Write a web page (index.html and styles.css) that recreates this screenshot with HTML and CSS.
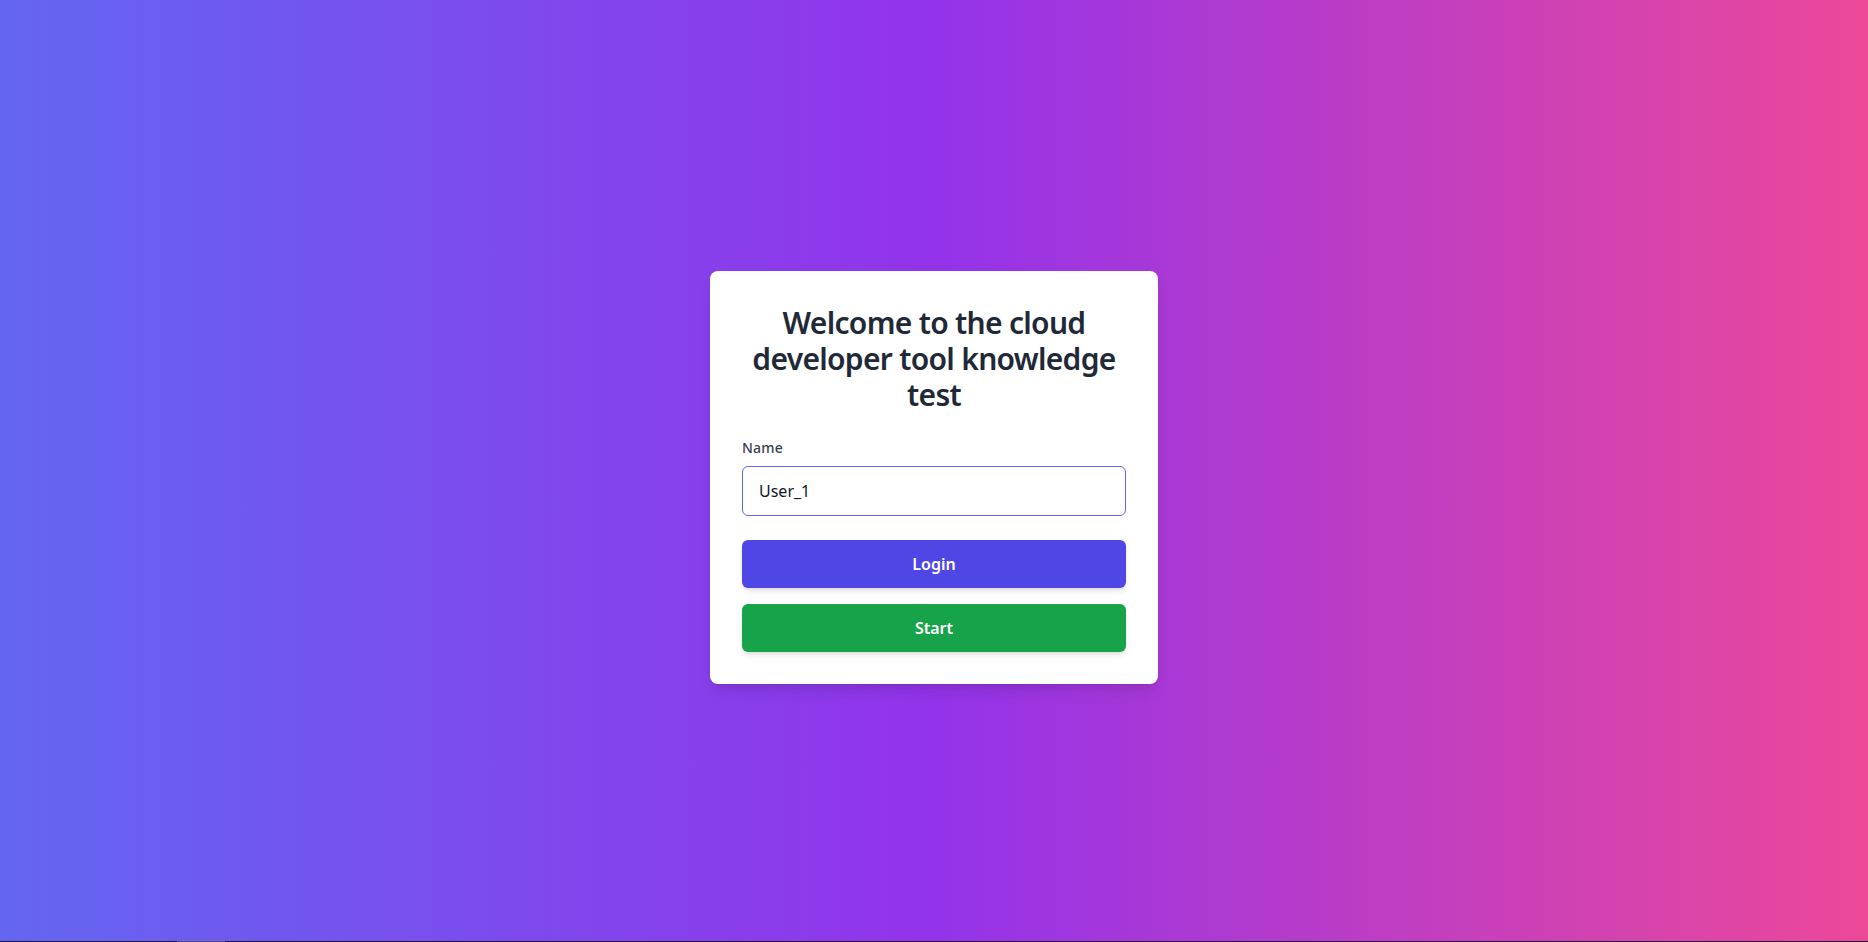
FILE: index.html
```html
<!DOCTYPE html>
<html lang="en">
<head>
<meta charset="utf-8">
<title>Cloud developer tool knowledge test</title>
<link rel="stylesheet" href="styles.css">
</head>
<body>
<main class="page">
  <section class="card">
    <h1 class="title">Welcome to the cloud developer tool knowledge test</h1>
    <form class="form">
      <label class="label" for="name">Name</label>
      <input class="input" id="name" type="text" value="User_1">
      <button type="button" class="btn btn-login">Login</button>
      <button type="button" class="btn btn-start">Start</button>
    </form>
  </section>
</main>
<div class="bottom-line"><span class="bottom-thumb"></span></div>
</body>
</html>
```
FILE: styles.css
```css
* { box-sizing: border-box; }
html, body { margin: 0; padding: 0; height: 100%; }
body {
  font-family: "Noto Sans", "Open Sans", "Liberation Sans", sans-serif;
  background: linear-gradient(to right, #6366f1, #9333ea, #ec4899);
  overflow: hidden;
}
.page {
  min-height: 100vh;
  display: flex;
  align-items: center;
  justify-content: center;
  padding-top: 13px;
}
.card {
  width: 448px;
  background: #fff;
  border-radius: 8px;
  padding: 32px;
  box-shadow: 0 10px 15px -3px rgba(0,0,0,0.1), 0 4px 6px -4px rgba(0,0,0,0.1);
}
.title {
  margin: 0 0 25px;
  padding-top: 2px;
  font-size: 30px;
  line-height: 36px;
  font-weight: 600;
  color: #1f2937;
  text-align: center;
  letter-spacing: -0.7px;
}
.form { display: flex; flex-direction: column; }
.label {
  font-size: 14px;
  line-height: 20px;
  font-weight: 500;
  color: #374151;
  margin-bottom: 8px;
  letter-spacing: 0.2px;
}
.input {
  height: 50px;
  border: 1px solid #6366f1;
  border-radius: 6px;
  padding: 0 16px;
  font-family: inherit;
  font-size: 16px;
  color: #111827;
  outline: none;
  margin-bottom: 24px;
}
.btn {
  height: 48px;
  border: none;
  border-radius: 6px;
  color: #fff;
  font-family: inherit;
  font-size: 16px;
  font-weight: 600;
  box-shadow: 0 4px 6px -1px rgba(0,0,0,0.1), 0 2px 4px -2px rgba(0,0,0,0.1);
  cursor: pointer;
}
.btn-login { background: #4f46e5; margin-bottom: 16px; }
.btn-start { background: #16a34a; }
.bottom-line {
  position: fixed;
  left: 0; right: 0; bottom: 0;
  height: 1px;
  background: #1c1836;
}
.bottom-thumb {
  position: absolute;
  left: 177px;
  width: 48px;
  top: 0; height: 1px;
  background: #55506e;
}
```
